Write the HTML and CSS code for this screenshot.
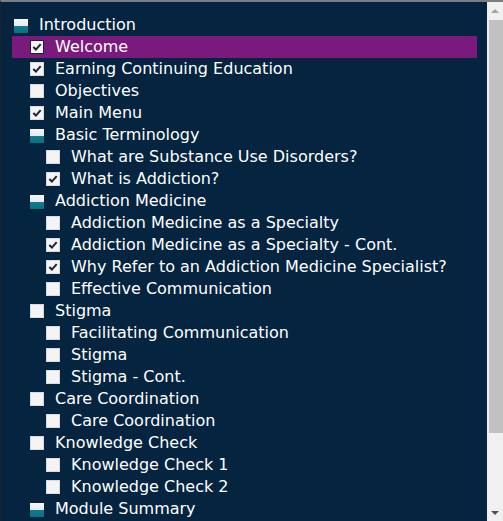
FILE: index.html
```html
<!DOCTYPE html>
<html>
<head>
<meta charset="utf-8">
<link rel="stylesheet" href="styles.css">
</head>
<body>
<div class="frame">
  <div class="tree">
    <div class="row l1"><span class="ico part"></span><span class="label">Introduction</span></div>
    <div class="row l2 active"><span class="ico box on focus"><svg viewBox="0 0 13 13"><path d="M2.5 6.5 L5.3 9.3 L10.5 3.3"/></svg></span><span class="label">Welcome</span></div>
    <div class="row l2"><span class="ico box on"><svg viewBox="0 0 13 13"><path d="M2.5 6.5 L5.3 9.3 L10.5 3.3"/></svg></span><span class="label">Earning Continuing Education</span></div>
    <div class="row l2"><span class="ico box"></span><span class="label">Objectives</span></div>
    <div class="row l2"><span class="ico box on"><svg viewBox="0 0 13 13"><path d="M2.5 6.5 L5.3 9.3 L10.5 3.3"/></svg></span><span class="label">Main Menu</span></div>
    <div class="row l2"><span class="ico part"></span><span class="label">Basic Terminology</span></div>
    <div class="row l3"><span class="ico box"></span><span class="label">What are Substance Use Disorders?</span></div>
    <div class="row l3"><span class="ico box on"><svg viewBox="0 0 13 13"><path d="M2.5 6.5 L5.3 9.3 L10.5 3.3"/></svg></span><span class="label">What is Addiction?</span></div>
    <div class="row l2"><span class="ico part"></span><span class="label">Addiction Medicine</span></div>
    <div class="row l3"><span class="ico box"></span><span class="label">Addiction Medicine as a Specialty</span></div>
    <div class="row l3"><span class="ico box on"><svg viewBox="0 0 13 13"><path d="M2.5 6.5 L5.3 9.3 L10.5 3.3"/></svg></span><span class="label">Addiction Medicine as a Specialty - Cont.</span></div>
    <div class="row l3"><span class="ico box on"><svg viewBox="0 0 13 13"><path d="M2.5 6.5 L5.3 9.3 L10.5 3.3"/></svg></span><span class="label">Why Refer to an Addiction Medicine Specialist?</span></div>
    <div class="row l3"><span class="ico box"></span><span class="label">Effective Communication</span></div>
    <div class="row l2"><span class="ico box"></span><span class="label">Stigma</span></div>
    <div class="row l3"><span class="ico box"></span><span class="label">Facilitating Communication</span></div>
    <div class="row l3"><span class="ico box"></span><span class="label">Stigma</span></div>
    <div class="row l3"><span class="ico box"></span><span class="label">Stigma - Cont.</span></div>
    <div class="row l2"><span class="ico box"></span><span class="label">Care Coordination</span></div>
    <div class="row l3"><span class="ico box"></span><span class="label">Care Coordination</span></div>
    <div class="row l2"><span class="ico box"></span><span class="label">Knowledge Check</span></div>
    <div class="row l3"><span class="ico box"></span><span class="label">Knowledge Check 1</span></div>
    <div class="row l3"><span class="ico box"></span><span class="label">Knowledge Check 2</span></div>
    <div class="row l2"><span class="ico part"></span><span class="label">Module Summary</span></div>
  </div>
  <div class="scrollbar">
    <div class="sb-btn"><span class="arrow up"></span></div>
    <div class="sb-track"><div class="sb-thumb"></div></div>
    <div class="sb-btn"><span class="arrow down"></span></div>
  </div>
</div>
</body>
</html>
```
FILE: styles.css
```css
html, body {
  margin: 0;
  padding: 0;
  width: 503px;
  height: 521px;
  overflow: hidden;
  background: #05243f;
}
.frame {
  display: flex;
  width: 503px;
  height: 521px;
  box-sizing: border-box;
  border-top: 2px solid #7a7e83;
  border-left: 1px solid #1a2230;
  background: #05243f;
  overflow: hidden;
}
.tree {
  flex: 1;
  padding: 12px 10px 0 11px;
  overflow: hidden;
  font-family: "DejaVu Sans", Verdana, sans-serif;
  font-size: 16px;
  color: #ffffff;
}
.row {
  display: flex;
  align-items: center;
  height: 22px;
  line-height: 22px;
  white-space: nowrap;
}
.row.l1 { padding-left: 2px; }
.row.l2 { padding-left: 18px; }
.row.l3 { padding-left: 34px; }
.row.active { background: #7a1a7d; }
.ico {
  flex: none;
  width: 14px;
  height: 14px;
  margin-right: 11px;
  box-sizing: border-box;
}
.ico.part {
  width: 14px;
  height: 14px;
  background: linear-gradient(#f7f7f7 0, #e4eaec 50%, #0f7f8f 50%, #0b6f80 100%);
  margin-top: 1px;
}
.ico.box {
  width: 14px;
  height: 14px;
  background: #f4f4f4;
  border: 1px solid #dadada;
}
.ico.box.focus {
  border: 1px solid #1b2233;
}
.ico svg {
  display: block;
  width: 12px;
  height: 12px;
}
.ico svg path {
  fill: none;
  stroke: #1e2430;
  stroke-width: 2.2;
}
.scrollbar {
  flex: none;
  width: 16px;
  display: flex;
  flex-direction: column;
  background: #f0f0f0;
}
.sb-btn {
  height: 17px;
  display: flex;
  align-items: center;
  justify-content: center;
}
.sb-track {
  flex: 1;
  padding: 1px 0 70px 2px;
}
.sb-thumb {
  height: 413px;
  background: #c1c1c1;
}
.arrow {
  width: 0;
  height: 0;
  border-left: 4px solid transparent;
  border-right: 4px solid transparent;
}
.arrow.up { border-bottom: 4px solid #a3a3a3; }
.arrow.down { border-top: 4px solid #505050; }
```
